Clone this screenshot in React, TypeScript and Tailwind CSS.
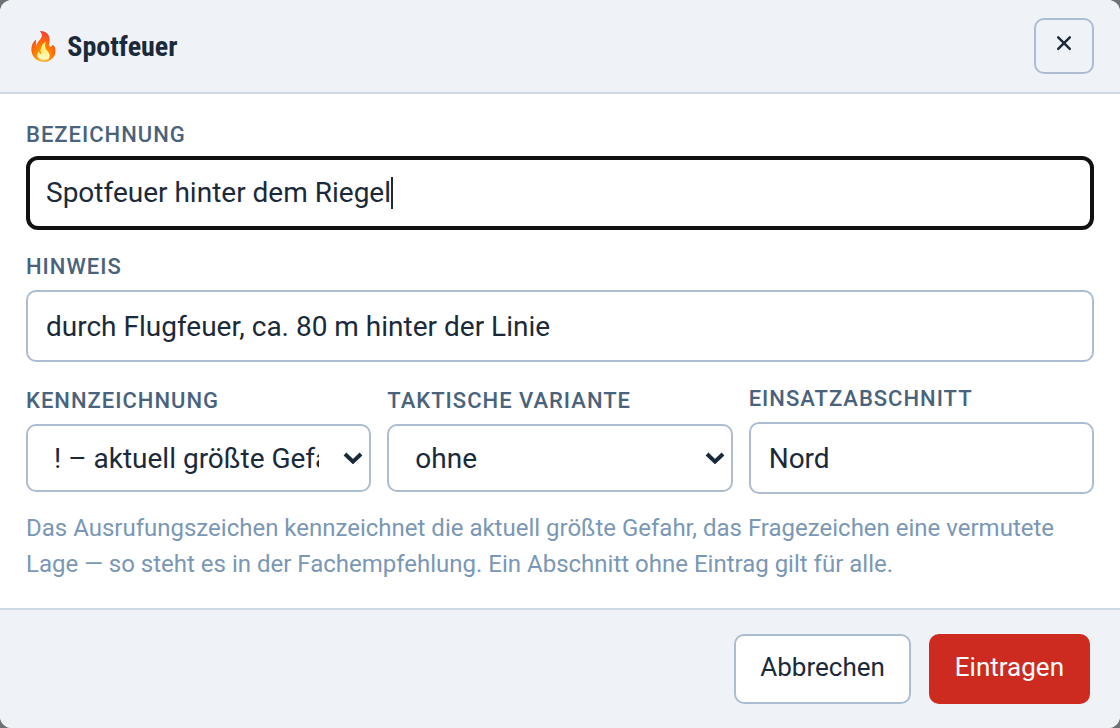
import type { ReactNode } from "react";

const labelClass =
  "text-[22px] leading-[30px] font-medium uppercase tracking-[1px] text-[#4a637c]";
const controlClass =
  "w-full rounded-[10px] border-2 border-[#adbdd1] bg-white text-[28px] text-[#1b2a3a] outline-none";

function Field({ id, label, children }: { id: string; label: string; children: ReactNode }) {
  return (
    <div className="flex min-w-0 flex-col gap-2">
      <label htmlFor={id} className={labelClass}>
        {label}
      </label>
      {children}
    </div>
  );
}

function SelectBox({ id, options }: { id: string; options: string[] }) {
  return (
    <div className="relative">
      <select
        id={id}
        className={`${controlClass} h-[68px] appearance-none pt-0.5 pr-[50px] pl-[26px]`}
      >
        {options.map((option) => (
          <option key={option}>{option}</option>
        ))}
      </select>
      <svg
        className="pointer-events-none absolute top-7 right-2 h-3 w-5"
        viewBox="0 0 20 12"
        fill="none"
        stroke="#1b2a3a"
        strokeWidth="4"
        aria-hidden="true"
      >
        <path d="M2 2l8 7.6L18 2" />
      </svg>
    </div>
  );
}

export default function App() {
  return (
    <div className="min-h-screen bg-[#6f7175] font-['Roboto',sans-serif]">
      <form
        className="flex min-h-screen flex-col overflow-hidden rounded-xl bg-white"
        onSubmit={(event) => event.preventDefault()}
      >
        <header className="flex items-center justify-between border-b-2 border-[#ced8e3] bg-[#eff3f8] px-[26px] py-[18px]">
          <h1 className="pt-0.5 font-['Roboto_Condensed','Roboto','Noto_Color_Emoji',sans-serif] text-[28px] leading-9 font-bold text-[#1b2a3a]">
            🔥 Spotfeuer
          </h1>
          <button
            type="button"
            aria-label="Schließen"
            className="flex h-14 w-[60px] justify-center rounded-[10px] border-2 border-[#adbdd1] pt-[15px]"
          >
            <svg
              className="h-4 w-4"
              viewBox="0 0 16 16"
              fill="none"
              stroke="#1b2a3a"
              strokeWidth="2.5"
              strokeLinecap="round"
              aria-hidden="true"
            >
              <path d="M2.2 2.4l11.6 11.4M13.8 2.4L2.2 13.8" />
            </svg>
          </button>
        </header>

        <main className="flex grow flex-col gap-[22px] p-[26px]">
          <div className="flex flex-col gap-1.5">
            <label htmlFor="bezeichnung" className={labelClass}>
              Bezeichnung
            </label>
            <div className="flex h-[74px] items-center rounded-xl border-4 border-[#101010] bg-white px-4">
              <input
                id="bezeichnung"
                defaultValue="Spotfeuer hinter dem Riegel"
                className="field-sizing-content min-w-0 text-[28px] text-[#1b2a3a] caret-transparent outline-none"
              />
              <span className="h-8 w-0.5 bg-[#1b2a3a]" />
            </div>
          </div>

          <Field id="hinweis" label="Hinweis">
            <input
              id="hinweis"
              defaultValue="durch Flugfeuer, ca. 80 m hinter der Linie"
              className={`${controlClass} h-[72px] px-[18px]`}
            />
          </Field>

          <div className="flex flex-col gap-4">
            <div className="grid grid-cols-3 items-center gap-4">
              <Field id="kennzeichnung" label="Kennzeichnung">
                <SelectBox
                  id="kennzeichnung"
                  options={["! – aktuell größte Gefahr", "? – vermutete Lage", "ohne"]}
                />
              </Field>
              <Field id="variante" label="Taktische Variante">
                <SelectBox id="variante" options={["ohne"]} />
              </Field>
              <Field id="abschnitt" label="Einsatzabschnitt">
                <input
                  id="abschnitt"
                  defaultValue="Nord"
                  className={`${controlClass} h-[72px] px-[18px]`}
                />
              </Field>
            </div>
            <p className="text-2xl leading-9 text-[#7a97b5]">
              Das Ausrufungszeichen kennzeichnet die aktuell größte Gefahr, das Fragezeichen eine
              vermutete Lage — so steht es in der Fachempfehlung. Ein Abschnitt ohne Eintrag gilt
              für alle.
            </p>
          </div>
        </main>

        <footer className="flex justify-end gap-[18px] border-t-2 border-[#ced8e3] bg-[#eff3f8] px-[30px] py-6">
          <button
            type="button"
            className="h-[70px] rounded-[10px] border-2 border-[#adbdd1] bg-white px-6 pb-1 text-[26px] text-[#1b2a3a]"
          >
            Abbrechen
          </button>
          <button
            type="submit"
            className="h-[70px] rounded-[10px] border-2 border-[#cd2b1f] bg-[#cd2b1f] px-6 pb-1 text-[26px] text-white"
          >
            Eintragen
          </button>
        </footer>
      </form>
    </div>
  );
}
